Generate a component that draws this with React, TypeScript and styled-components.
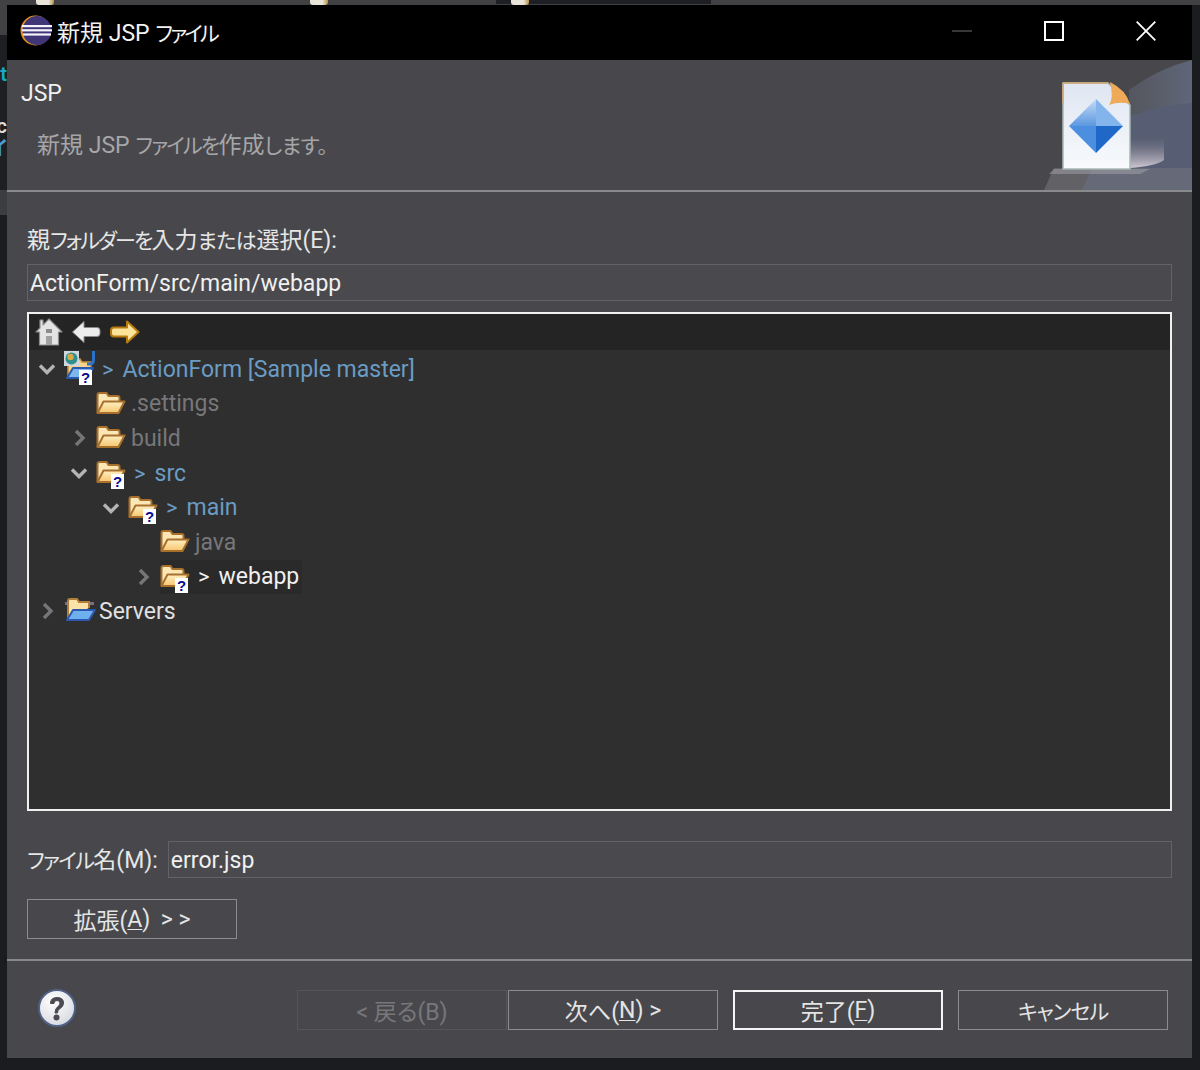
import React from "react";
import styled, { createGlobalStyle } from "styled-components";

const Global = createGlobalStyle`
  html, body { margin: 0; padding: 0; background: #1b1c20; }
  #root { width: 1200px; height: 1070px; overflow: hidden; }
`;
const FONT = `Roboto, "Noto Sans", "Noto Sans CJK JP", sans-serif`;

const Desk = styled.div`
  width: 1200px; height: 1070px; display: grid;
  grid-template-columns: 7px 1fr 8px; grid-template-rows: 5px 1053px 12px;
  background: #1b1c20; font-family: ${FONT}; font-size: 23px; color: #e4e4e4; overflow: hidden;
  font-feature-settings: "palt";
`;
const TopStrip = styled.div`
  grid-column: 1 / 4; background: #414144; display: flex; align-items: flex-start; overflow: hidden;
`;
const TabStub = styled.span<{ $w: number }>`
  flex: none; width: ${p => p.$w}px; height: 5px;
`;
const TabIcon = styled(TabStub)`
  background: linear-gradient(90deg, #e8e4d8 0 70%, #b89040 100%); border-radius: 0 0 3px 3px;
`;
const DarkTab = styled.div`
  flex: none; width: 215px; height: 4px; background: #1e1f24; display: flex; padding-left: 15px; box-sizing: border-box;
`;
const LeftStrip = styled.div`
  display: grid; grid-template-rows: 30px 155px 25px 1fr; overflow: hidden; background: #1b1c20;
`;
const StripTop = styled.div` background: #414144; `;
const StripIde = styled.div`
  background: #1d1f23; display: flex; flex-direction: column; align-items: flex-end; padding-top: 28px; overflow: hidden;
`;
const StripMark = styled.span<{ $c: string; $mt: number }>`
  color: ${p => p.$c}; margin-top: ${p => p.$mt}px; font-size: 20px; font-weight: 600; width: 7px; height: 23px; line-height: 23px; overflow: hidden; direction: rtl; white-space: nowrap;
`;
const StripBand = styled.div` background: #3c3d40; `;
const RightStrip = styled.div` background: #1b1c20; `;

const Win = styled.div`
  background: #48484c; display: flex; flex-direction: column; min-width: 0;
`;
const TitleBar = styled.div`
  flex: none; height: 55px; box-sizing: border-box; padding: 0 0 3px 13px; background: #000; display: flex; align-items: center; color: #f2f2f2;
`;
const TitleText = styled.span`
  margin-left: 5px; font-size: 23px; white-space: nowrap; flex: 1;
`;
const WinBtn = styled.span`
  flex: none; width: 92px; height: 52px; display: flex; align-items: center; justify-content: center;
`;
const Header = styled.div`
  flex: none; height: 130px; display: flex; justify-content: space-between; border-bottom: 2px solid #8a8a8c;
`;
const HeaderText = styled.div`
  padding: 17px 0 0 14px; display: flex; flex-direction: column;
`;
const HeaderTitle = styled.div` line-height: 34px; font-size: 23px; color: #f0f0f0; `;
const HeaderDesc = styled.div`
  margin: 18px 0 0 16px; line-height: 34px; font-size: 23px; color: #a6a6a8; white-space: nowrap;
`;
const Kana = styled.span<{ $ls?: number }>`
  font-size: 21px; letter-spacing: ${p => p.$ls ?? -2.2}px;
`;
const Form = styled.div`
  flex: none; height: 767px; box-sizing: border-box; padding: 32px 20px 0 20px; display: flex; flex-direction: column;
`;
const Label = styled.div`
  line-height: 34px; font-size: 23px; color: #e6e6e6; white-space: nowrap;
`;
const Field = styled.div`
  height: 37px; box-sizing: border-box; border: 1px solid #636367; background: #4a4a4e;
  padding: 2px 0 0 2px; line-height: 33px; font-size: 23px; color: #f0f0f0; white-space: nowrap;
`;
const PathField = styled(Field)` margin-top: 6px; flex: none; `;
const Tree = styled.div`
  margin-top: 11px; height: 499px; box-sizing: border-box; border: 2px solid #f0f0f0; background: #2f2f2f; flex: none;
`;
const TreeBar = styled.div`
  height: 36px; background: #242424; display: flex; align-items: center; padding-left: 2px; gap: 2px;
`;
const ToolIcon = styled.span` width: 36px; height: 32px; display: flex; align-items: center; justify-content: center; `;
const Rows = styled.div` display: flex; flex-direction: column; padding-top: 2px; `;
const Row = styled.div<{ $level: number }>`
  height: 34.6px; display: flex; align-items: center; padding-left: ${p => 9 + p.$level * 32}px;
  font-size: 23px; white-space: nowrap;
`;
const Chevron = styled.span`
  flex: none; width: 18px; height: 18px; margin-right: 8px; display: flex;
`;
const NodeIcon = styled.span`
  flex: none; width: 32px; height: 32px; position: relative; display: block; margin-right: 3px;
`;
const Badge = styled.span`
  position: absolute; right: 4px; bottom: 0; width: 13px; height: 15px; background: #fff; color: #0a0a8c;
  font: 700 15px/15px "Liberation Sans", sans-serif; text-align: center;
`;
const Deco = styled.span<{ $c?: string }>`
  color: ${p => p.$c ?? "#6a9cc4"}; margin: 0 9px 0 3px; font-size: 22px;
`;
const Name = styled.span<{ $c: string }>` color: ${p => p.$c}; `;
const Selected = styled.span`
  display: flex; align-items: center; background: #2a2a2a; height: 34px; padding-right: 3px;
`;
const FileRow = styled.div`
  margin-top: 30px; height: 37px; display: flex; gap: 10px; align-items: flex-end;
`;
const FileField = styled(Field)` flex: 1; `;
const ExpandWrap = styled.div` margin-top: 21px; height: 40px; display: flex; `;
const Btn = styled.div<{ $tone?: "default" | "primary" | "disabled" }>`
  flex: none; width: 210px; height: 40px; box-sizing: border-box; display: flex; align-items: center; justify-content: center;
  font-size: 23px; white-space: pre;
  border: ${p => p.$tone === "primary" ? "2px solid #f4f4f4" : p.$tone === "disabled" ? "1px solid #55555a" : "1px solid #8c8c8e"};
  color: ${p => p.$tone === "disabled" ? "#77777a" : "#e4e4e4"};
`;
const Mn = styled.span` text-decoration: underline; text-underline-offset: 2px; text-decoration-thickness: 1px; `;
const Divider = styled.div` flex: none; height: 2px; background: #8a8a8c; `;
const Footer = styled.div`
  flex: 1; display: flex; align-items: flex-start; padding: 29px 25px 0 31px;
`;
const Help = styled.span` flex: none; margin-top: -1px; width: 38px; height: 38px; margin-right: 221px; display: block; `;
const Tight = styled.span` margin-left: 1px; `;
const Spaced = styled.span` margin-left: 15px; `;

const Eclipse = () => (
  <svg width="32" height="32" viewBox="0 0 32 32">
    <circle cx="15.5" cy="15.5" r="15" fill="#e8941e" />
    <circle cx="17" cy="15.5" r="14.5" fill="#3f3577" />
    <rect x="2" y="10" width="30" height="2.2" fill="#f4f2fa" />
    <rect x="2" y="14.2" width="30" height="2.2" fill="#f4f2fa" />
    <rect x="3" y="18.4" width="28" height="2.2" fill="#f4f2fa" />
  </svg>
);
const Folder = () => (
  <svg width="30" height="26" viewBox="0 0 30 26" style={{ marginTop: 2 }}>
    <defs>
      <linearGradient id="fo" x1="0" y1="0" x2="0" y2="1">
        <stop offset="0" stopColor="#fff0c4" /><stop offset="1" stopColor="#f6c56e" />
      </linearGradient>
    </defs>
    <path d="M1.5 23V5q0-2 2-2h7l2 3h9q2 0 2 2v3" fill="#fbe7b6" stroke="#a8702c" strokeWidth="2" />
    <path d="M1.5 23l6-11.5H28.5l-6 11.5z" fill="url(#fo)" stroke="#a8702c" strokeWidth="2" strokeLinejoin="round" />
  </svg>
);
const ServerFolder = () => (
  <svg width="32" height="26" viewBox="0 0 32 26" style={{ marginTop: 1 }}>
    <rect x="1" y="6" width="29" height="3" fill="#7a6e80" />
    <path d="M4 22V5q0-2 2-2h7l2 3h10v6" fill="#fbe2a8" stroke="#b0803a" strokeWidth="2" />
    <path d="M3 24l6-10h22l-6 10z" fill="#6fb0ee" stroke="#2c58b0" strokeWidth="2" strokeLinejoin="round" />
  </svg>
);
const ProjectIcon = () => (
  <svg width="32" height="32" viewBox="0 0 32 32" style={{ marginTop: -2 }}>
    <path d="M4 26V8h12l2 3h9v15z" fill="#f6d38a" stroke="#c09040" strokeWidth="1.500" />
    <path d="M3 27l6-10h20l-6 10z" fill="#7cb8ee" stroke="#2c58b0" strokeWidth="2" strokeLinejoin="round" />
    <rect x="0" y="0" width="15" height="15" fill="#cfd6dc" />
    <circle cx="7.500" cy="7.500" r="6" fill="#2f8f8a" />
    <circle cx="6.500" cy="6" r="3.200" fill="#d8a948" />
    <path d="M29.500 0v9q0 4-4 4h-2.500" fill="none" stroke="#2a72c8" strokeWidth="3" />
  </svg>
);
const Down = () => (
  <svg width="18" height="18" viewBox="0 0 18 18"><path d="M2 5.5l7 7 7-7" fill="none" stroke="#b4b4b4" strokeWidth="3.4" /></svg>
);
const Right = () => (
  <svg width="18" height="18" viewBox="0 0 18 18"><path d="M6 2l7 7-7 7" fill="none" stroke="#76767a" strokeWidth="3.4" /></svg>
);
const None = () => <svg width="18" height="18" viewBox="0 0 18 18" />;
const Home = () => (
  <svg width="28" height="30" viewBox="0 0 28 30">
    <path d="M5 3h3v5l6-6 13 13h-3.500v13h-19V15H1l4-4z" fill="#e4e4e4" stroke="#8c8c8c" strokeWidth="1.200" strokeLinejoin="round" />
    <rect x="11" y="12" width="6" height="4" fill="#8c8c8c" />
    <rect x="11" y="19" width="6" height="9" fill="#a0a0a0" />
  </svg>
);
const Back = () => (
  <svg width="30" height="24" viewBox="2 0 30 24">
    <path d="M1.500 12L13 1.500v6h13q3 0 3 3v3q0 3-3 3H13v6z" fill="#ececec" stroke="#8a8a8a" strokeLinejoin="round" transform="translate(1 0)" />
  </svg>
);
const Forward = () => (
  <svg width="30" height="24" viewBox="0 0 30 24">
    <path d="M28.500 12L17 1.500v6H4q-3 0-3 3v3q0 3 3 3h13v6z" fill="#fbe39a" stroke="#b77c10" strokeWidth="2" strokeLinejoin="round" />
  </svg>
);
const HelpIcon = () => (
  <svg width="38" height="38" viewBox="0 0 38 38">
    <defs>
      <radialGradient id="hg" cx="0.4" cy="0.3" r="0.8"><stop offset="0" stopColor="#fff" /><stop offset="1" stopColor="#d4d6de" /></radialGradient>
    </defs>
    <circle cx="19" cy="19" r="18" fill="url(#hg)" stroke="#4f6288" strokeWidth="2" />
    <path d="M12.500 14.500q0-6 6.500-6t6.500 5.500q0 3.500-3.500 5.500-2.500 1.500-2.500 4.500h-2.500q0-4.500 3-6.500 2-1.500 2-3.500 0-2.500-3-2.500t-3 3z" fill="#4a4a50" stroke="#4a4a50" />
    <circle cx="18.500" cy="28.500" r="3" fill="#4a4a50" />
  </svg>
);
const Banner = () => (
  <svg width="148" height="130" viewBox="0 0 148 130">
    <defs>
      <linearGradient id="sw" x1="0" y1="0" x2="1" y2="0"><stop offset="0" stopColor="#55565e" /><stop offset="1" stopColor="#5f6678" /></linearGradient>
      <linearGradient id="wb" x1="0" y1="0" x2="0" y2="1"><stop offset="0" stopColor="#8a8692" stopOpacity="0" /><stop offset="1" stopColor="#cfc8d4" /></linearGradient>
      <linearGradient id="dc" x1="0" y1="0" x2="0" y2="1"><stop offset="0" stopColor="#dfe6f2" /><stop offset="1" stopColor="#f8fafc" /></linearGradient>
      <linearGradient id="d1" x1="0" y1="0" x2="0" y2="1"><stop offset="0" stopColor="#c4dcf6" /><stop offset="1" stopColor="#5c98e0" /></linearGradient>
    </defs>
    <path d="M85 30Q115 8 148 0V130H85z" fill="url(#sw)" />
    <path d="M86 56Q115 46 148 43V130H86z" fill="#575e74" />
    <path d="M0 130l10-22h60v22z" fill="#616166" />
    <path d="M38 130l10-22h100v22z" fill="#666a78" />
    <path d="M86 78h34v22q-8 6-34 8z" fill="url(#wb)" />
    <path d="M10 109h96l-10 5H5z" fill="#a09ea6" opacity=".55" />
    <path d="M19 23h45l22 22v64H19z" fill="url(#dc)" stroke="#a8b8b4" strokeWidth="1.500" />
    <path d="M19 23h45M19 23v20" stroke="#d8a870" strokeWidth="1.500" />
    <path d="M66 22q4 16-1 23 10-4 21-1-4-14-20-22z" fill="#eeaa58" />
    <path d="M52 39L79 66H52z" fill="#84b4ec" />
    <path d="M52 39L25 66h27z" fill="url(#d1)" />
    <path d="M25 66l27 27V66z" fill="#4c8ee0" />
    <path d="M79 66L52 93V66z" fill="#2068c8" />
  </svg>
);

const Node = ({ level, chev, icon, badge, deco, name, color }: { level: number; chev: "down" | "right" | "none"; icon: React.ReactNode; badge?: boolean; deco?: boolean; name: string; color: string; }) => (
  <Row $level={level}>
    <Chevron>{chev === "down" ? <Down /> : chev === "right" ? <Right /> : <None />}</Chevron>
    <NodeIcon>{icon}{badge && <Badge>?</Badge>}</NodeIcon>
    {deco && <Deco>&gt;</Deco>}
    <Name $c={color}>{name}</Name>
  </Row>
);

export default function App() {
  return (
    <>
      <Global />
      <Desk>
        <TopStrip>
          <TabStub $w={36} /><TabIcon $w={18} /><TabStub $w={256} /><TabIcon $w={18} /><TabStub $w={168} />
          <DarkTab><TabIcon $w={18} /></DarkTab>
        </TopStrip>
        <LeftStrip>
          <StripTop />
          <StripIde>
            <StripMark $c="#19a8c8" $mt={0}>t</StripMark>
            <StripMark $c="#dcdcdc" $mt={29}>c</StripMark>
            <StripMark $c="#4a9cd0" $mt={0}>イ</StripMark>
          </StripIde>
          <StripBand />
          <div />
        </LeftStrip>
        <Win>
          <TitleBar>
            <Eclipse />
            <TitleText>新規 JSP <Kana $ls={-2.8}>ファイル</Kana></TitleText>
            <WinBtn>
              <svg width="20" height="20" viewBox="0 0 20 20"><path d="M0 10h20" stroke="#4a4a4a" strokeWidth="1.500" /></svg>
            </WinBtn>
            <WinBtn>
              <svg width="20" height="20" viewBox="0 0 20 20"><rect x="1" y="1" width="18" height="18" fill="none" stroke="#fff" strokeWidth="2" /></svg>
            </WinBtn>
            <WinBtn>
              <svg width="20" height="20" viewBox="0 0 20 20"><path d="M.7.700l18.600 18.600M19.300.700L.7 19.300" fill="none" stroke="#fff" strokeWidth="1.800" /></svg>
            </WinBtn>
          </TitleBar>
          <Header>
            <HeaderText>
              <HeaderTitle>JSP</HeaderTitle>
              <HeaderDesc>新規 JSP <Kana $ls={-1.8}>ファイルを</Kana>作成<Kana $ls={-0.4}>します。</Kana></HeaderDesc>
            </HeaderText>
            <Banner />
          </Header>
          <Form>
            <Label>親<Kana $ls={-1.9}>フォルダーを</Kana>入力<Kana $ls={-0.5}>または</Kana>選択(E):</Label>
            <PathField>ActionForm/src/main/webapp</PathField>
            <Tree>
              <TreeBar>
                <ToolIcon><Home /></ToolIcon>
                <ToolIcon><Back /></ToolIcon>
                <ToolIcon><Forward /></ToolIcon>
              </TreeBar>
              <Rows>
                <Node level={0} chev="down" icon={<ProjectIcon />} badge deco name="ActionForm [Sample master]" color="#6a9cc4" />
                <Node level={1} chev="none" icon={<Folder />} name=".settings" color="#77777a" />
                <Node level={1} chev="right" icon={<Folder />} name="build" color="#77777a" />
                <Node level={1} chev="down" icon={<Folder />} badge deco name="src" color="#6a9cc4" />
                <Node level={2} chev="down" icon={<Folder />} badge deco name="main" color="#6a9cc4" />
                <Node level={3} chev="none" icon={<Folder />} name="java" color="#77777a" />
                <Row $level={3}>
                  <Chevron><Right /></Chevron>
                  <Selected>
                    <NodeIcon><Folder /><Badge>?</Badge></NodeIcon>
                    <Deco $c="#f0f0f0">&gt;</Deco>
                    <Name $c="#f0f0f0">webapp</Name>
                  </Selected>
                </Row>
                <Node level={0} chev="right" icon={<ServerFolder />} name="Servers" color="#e0e0e0" />
              </Rows>
            </Tree>
            <FileRow>
              <Label><Kana $ls={-1.6}>ファイル</Kana>名(M):</Label>
              <FileField>error.jsp</FileField>
            </FileRow>
            <ExpandWrap>
              <Btn>拡張(<Mn>A</Mn>){"\u00a0\u2009"}&gt; &gt;</Btn>
            </ExpandWrap>
          </Form>
          <Divider />
          <Footer>
            <Help><HelpIcon /></Help>
            <Btn $tone="disabled">&lt; 戻る(B)</Btn>
            <Tight><Btn>次へ(<Mn>N</Mn>) &gt;</Btn></Tight>
            <Spaced><Btn $tone="primary">完了(<Mn>F</Mn>)</Btn></Spaced>
            <Spaced><Btn><Kana $ls={-1}>キャンセル</Kana></Btn></Spaced>
          </Footer>
        </Win>
        <RightStrip />
      </Desk>
    </>
  );
}
